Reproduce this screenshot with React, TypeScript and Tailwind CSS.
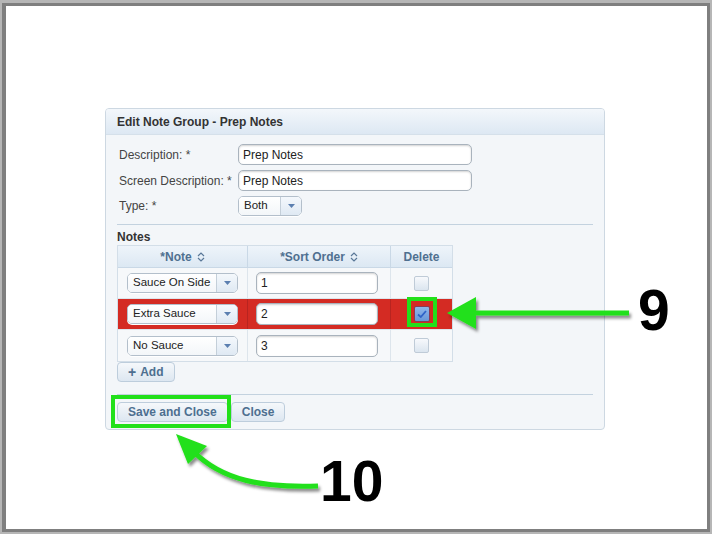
import React from "react";

const font = { fontFamily: '"Liberation Sans", Arial, sans-serif' };

function SortIcon() {
  return (
    <svg width="8" height="10" viewBox="0 0 8 10" className="ml-[5px] inline-block">
      <path d="M1 4 L4 1 L7 4 M1 6 L4 9 L7 6" fill="none" stroke="#5a7898" strokeWidth="1.2" />
    </svg>
  );
}

function Caret() {
  return (
    <svg width="7" height="4" viewBox="0 0 7 4">
      <path d="M0 0 H7 L3.5 4 Z" fill="#5b7fb0" />
    </svg>
  );
}

function Select({ value, width }: { value: string; width: string }) {
  return (
    <div
      className={`flex h-[20px] ${width} overflow-hidden rounded-[5px] border border-[#b3bfcb] bg-white shadow-[0_1px_0_#ffffff]`}
    >
      <div className="flex flex-1 items-center bg-gradient-to-b from-white to-[#f3f6f9] pl-[5px] text-[11.5px] text-[#222]">
        {value}
      </div>
      <div className="flex w-[21px] items-center justify-center border-l border-[#c4cfd9] bg-gradient-to-b from-[#f4f8fc] to-[#dfe9f3]">
        <Caret />
      </div>
    </div>
  );
}

function TextInput({ value, size }: { value: string; size: string }) {
  return (
    <div
      className={`flex ${size} items-center rounded-[5px] border border-[#a9b3bd] bg-white pl-[4px] text-[12px] text-[#222] shadow-[inset_0_1px_2px_rgba(0,0,0,0.18)]`}
    >
      {value}
    </div>
  );
}

function Checkbox({ checked }: { checked?: boolean }) {
  if (checked) {
    return (
      <div className="flex h-[16px] w-[16px] items-center justify-center rounded-[2px] border border-[#8a3a55] bg-gradient-to-b from-[#8fb6ea] to-[#6897d8]">
        <svg width="10" height="8" viewBox="0 0 10 8">
          <path d="M1 4.5 L3.8 7 L9 1" fill="none" stroke="#2f63c8" strokeWidth="1.8" />
        </svg>
      </div>
    );
  }
  return (
    <div className="h-[15px] w-[15px] rounded-[2px] border border-[#bfcbd7] bg-gradient-to-b from-[#f7f9fc] to-[#dbe5ef]" />
  );
}

function Button({ children }: { children: React.ReactNode }) {
  return (
    <div className="flex h-[20px] items-center rounded-[4px] border border-[#bdcddc] bg-gradient-to-b from-[#f5f8fb] to-[#dde7f1] px-[10px] text-[12px] font-bold text-[#4d6f90]">
      {children}
    </div>
  );
}

const notes = [
  { note: "Sauce On Side", order: "1" },
  { note: "Extra Sauce", order: "2", selected: true },
  { note: "No Sauce", order: "3" },
];

function Annotations() {
  return (
    <svg className="pointer-events-none absolute left-0 top-0" width="712" height="534" viewBox="0 0 712 534">
      <defs>
        <filter id="sh" x="-20%" y="-20%" width="140%" height="140%">
          <feDropShadow dx="2" dy="3" stdDeviation="1.6" floodColor="#000" floodOpacity="0.45" />
        </filter>
      </defs>
      {/* green frames */}
      <rect x="409" y="299" width="26" height="26" fill="none" stroke="#22e01a" strokeWidth="4" />
      <rect x="113" y="397" width="116" height="29" fill="none" stroke="#22e01a" strokeWidth="4" />
      {/* arrow 9 */}
      <g filter="url(#sh)">
        <path d="M470 313 H629" stroke="#22e01a" strokeWidth="5" />
        <path d="M447 313 L476 297 L476 329 Z" fill="#22e01a" />
      </g>
      {/* arrow 10 */}
      <g filter="url(#sh)">
        <path d="M318 486 C262 488 222 480 194 452" fill="none" stroke="#22e01a" strokeWidth="5" />
        <path d="M176 434 L207 446 L188 464 Z" fill="#22e01a" />
      </g>
    </svg>
  );
}

export default function App() {
  return (
    <div style={font} className="relative h-[534px] w-[712px] overflow-hidden bg-white">
      <div className="flex h-full w-full border-b-[2px] border-l-[2px] border-r-[2px] border-t-[3px] border-[#b6b6b6]">
        <div className="flex flex-1 flex-col border-b-[3px] border-l-[4px] border-r-[3px] border-t-[3px] border-[#7f7f7f] bg-white pl-[99px] pt-[102px]">
          {/* panel */}
          <div className="w-[500px] overflow-hidden rounded-[4px] border border-[#cdd8e2] bg-[#f3f6f9]">
            <div className="flex h-[26px] items-center border-b border-[#d5e0ea] bg-gradient-to-b from-[#f3f7fb] to-[#dde8f3] px-[11px] text-[12px] font-bold text-[#333]">
              Edit Note Group - Prep Notes
            </div>
            <div className="px-[11px] pb-[7px] pt-[9px]">
              <div className="flex flex-col gap-[5px]">
                <div className="flex items-center">
                  <div className="w-[121px] pl-[2px] text-[12px] text-[#444]">Description: *</div>
                  <TextInput value="Prep Notes" size="h-[21px] w-[234px]" />
                </div>
                <div className="flex items-center">
                  <div className="w-[121px] pl-[2px] text-[12px] text-[#444]">Screen Description: *</div>
                  <TextInput value="Prep Notes" size="h-[21px] w-[234px]" />
                </div>
                <div className="flex items-center">
                  <div className="w-[121px] pl-[2px] text-[12px] text-[#444]">Type: *</div>
                  <Select value="Both" width="w-[64px]" />
                </div>
              </div>

              <div className="mt-[8px] border-t border-[#c3d2df]" />

              <div className="mt-[6px] text-[12px] font-bold leading-[13px] text-[#333]">Notes</div>

              <div className="mt-[1px] w-[336px] border border-[#d3dee8]">
                <div className="flex h-[22px] border-b border-[#c9d8e6] bg-gradient-to-b from-[#eef4fa] to-[#dce8f3] text-[12px] font-bold text-[#4f7090]">
                  <div className="flex w-[130px] items-center justify-center border-r border-[#c9d8e6]">
                    *Note
                    <SortIcon />
                  </div>
                  <div className="flex w-[143px] items-center justify-center border-r border-[#c9d8e6]">
                    *Sort Order
                    <SortIcon />
                  </div>
                  <div className="flex flex-1 items-center justify-center">Delete</div>
                </div>
                {notes.map((n, i) => (
                  <div
                    key={n.note}
                    className={`flex h-[31px] ${i < notes.length - 1 ? "border-b border-[#dde5ec]" : ""} ${
                      n.selected ? "bg-[#d42b23]" : "bg-[#f6f8fa]"
                    }`}
                  >
                    <div
                      className={`flex w-[130px] items-center pl-[9px] border-r ${
                        n.selected ? "border-[#b82420]" : "border-[#dde5ec]"
                      }`}
                    >
                      <Select value={n.note} width="w-[111px]" />
                    </div>
                    <div
                      className={`flex w-[143px] items-center pl-[8px] border-r ${
                        n.selected ? "border-[#b82420]" : "border-[#dde5ec]"
                      }`}
                    >
                      <TextInput value={n.order} size="h-[22px] w-[122px]" />
                    </div>
                    <div className="flex flex-1 items-center justify-center">
                      <Checkbox checked={n.selected} />
                    </div>
                  </div>
                ))}
              </div>

              <div className="flex">
                <Button>
                  <span className="mr-[4px] text-[14px] leading-none">+</span>Add
                </Button>
              </div>

              <div className="mt-[12px] border-t border-[#c3d2df]" />

              <div className="mt-[7px] flex gap-[3px]">
                <Button>Save and Close</Button>
                <Button>Close</Button>
              </div>
            </div>
          </div>
        </div>
      </div>

      <Annotations />

      <div className="absolute left-[638px] top-[282px] text-[57px] font-bold leading-none text-black">9</div>
      <div className="absolute left-[320px] top-[453px] text-[57px] font-bold leading-none text-black">10</div>
    </div>
  );
}
